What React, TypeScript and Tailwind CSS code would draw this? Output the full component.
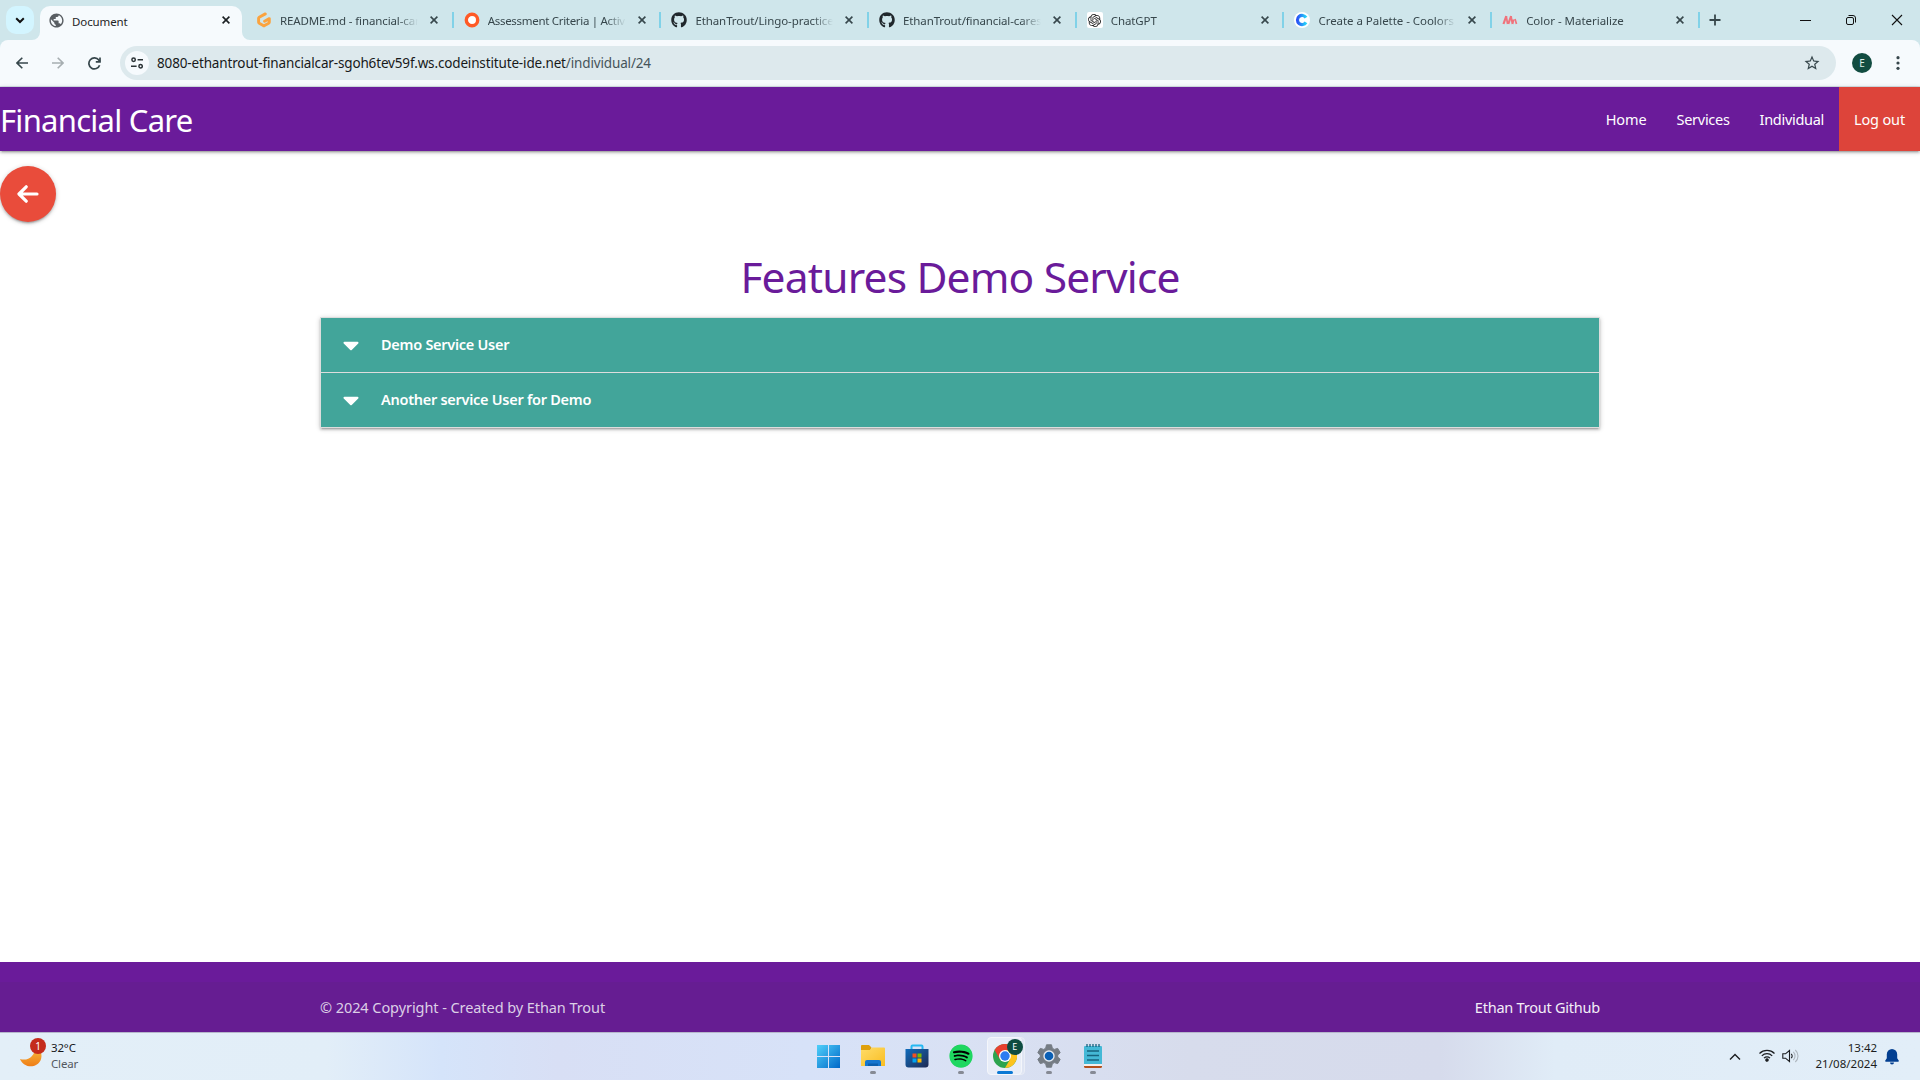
import React from "react";
import { FaGithub, FaSpotify, FaCaretDown } from "react-icons/fa";
import { SiOpenai } from "react-icons/si";
import { MdPublic, MdStarBorder } from "react-icons/md";

function Close({ active }: { active?: boolean }) {
  return (
    <svg width="8" height="8" viewBox="0 0 8 8" className="shrink-0" stroke={active ? "#1b2023" : "#37474c"} strokeWidth="1.6">
      <path d="M.6.6l6.8 6.8M7.4.6L.6 7.4" />
    </svg>
  );
}

function Gitpod() {
  return (
    <svg width="16" height="16" viewBox="0 0 16 16" fill="none" stroke="#fba33e" strokeWidth="2.9" strokeLinecap="round" strokeLinejoin="round">
      <path d="M9.3 1.9L3.2 5.2a1.2 1.2 0 0 0-.6 1v4.1c0 .5.2.8.6 1l4.1 2.3c.4.2.8.2 1.2 0l4.2-2.4c.4-.2.6-.5.6-1V6.600L8.600 9.200" />
    </svg>
  );
}

function Coolors() {
  return (
    <svg width="16" height="16" viewBox="0 0 16 16">
      <defs>
        <linearGradient id="cool" x1="0" x2="1">
          <stop offset="0" stopColor="#2a55f5" />
          <stop offset="1" stopColor="#28d5f8" />
        </linearGradient>
      </defs>
      <circle cx="8" cy="8" r="8" fill="#fff" />
      <path d="M12 5.6A4.6 4.6 0 1 0 12 10.4" fill="none" stroke="url(#cool)" strokeWidth="3.2" />
    </svg>
  );
}

function MaterializeLogo() {
  return (
    <svg width="16" height="16" viewBox="0 0 16 16" fill="none" stroke="#f0737c" strokeWidth="2.2">
      <path d="M1.500 12L4.300 4M6.300 12L9.100 4" />
      <path d="M4.300 4.500L5.600 12M9.100 4.500l1.300 7.500M11.600 7.500l-1 4.500M13 7l1.500 5" strokeWidth="1.700" />
    </svg>
  );
}

const tabs = [
  { title: "README.md - financial-care", icon: <Gitpod />, text: "tracking-[-0.12px]" },
  {
    title: "Assessment Criteria | Activity",
    icon: (
      <svg width="16" height="16" viewBox="0 0 16 16">
        <circle cx="8" cy="8" r="5.7" fill="#fff" stroke="#ff5a26" strokeWidth="3.4" />
      </svg>
    ),
    text: "tracking-[-0.3px]",
  },
  { title: "EthanTrout/Lingo-practice", icon: <FaGithub size={16} color="#20272c" />, text: "tracking-[-0.09px]" },
  { title: "EthanTrout/financial-cares", icon: <FaGithub size={16} color="#20272c" />, text: "tracking-[-0.12px]" },
  {
    title: "ChatGPT",
    icon: (
      <span className="flex size-4 items-center justify-center rounded-[2px] bg-white">
        <SiOpenai size={13} color="#222" />
      </span>
    ),
    text: "tracking-[-0.1px]",
  },
  { title: "Create a Palette - Coolors", icon: <Coolors />, text: "tracking-[-0.04px]" },
  { title: "Color - Materialize", icon: <MaterializeLogo />, text: "tracking-[-0.02px]" },
];

function TabBar() {
  return (
    <div className="flex h-10 bg-[#cfe6eb] text-[11.5px] text-[#37474c]">
      <div className="mt-1.5 ml-1.5 flex size-7 items-center justify-center rounded-[10px] bg-[#d3f5ff]">
        <svg width="10" height="7" viewBox="0 0 10 7" fill="none" stroke="#111" strokeWidth="2">
          <path d="M1.2 1.3L5 5l3.8-3.7" />
        </svg>
      </div>
      <div className="relative mt-1.5 ml-1.5 flex h-[34px] w-[202px] items-center rounded-t-[10px] bg-[#f6fafd] pr-3 pl-2 text-[#1f2426]">
        <svg className="absolute bottom-0 -left-2" width="8" height="8" viewBox="0 0 8 8">
          <path d="M8 0v8H0a8 8 0 0 0 8-8z" fill="#f6fafd" />
        </svg>
        <svg className="absolute -right-2 bottom-0" width="8" height="8" viewBox="0 0 8 8">
          <path d="M0 0v8h8a8 8 0 0 1-8-8z" fill="#f6fafd" />
        </svg>
        <MdPublic size={17} color="#595e63" className="-mt-1.5" />
        <span className="-mt-[3px] ml-[7px] flex-1 tracking-[-0.1px]">Document</span>
        <span className="-mt-1.5"><Close active /></span>
      </div>
      <div className="flex h-10 pl-[3px]">
        {tabs.map((t) => (
          <div key={t.title} className="relative flex w-[207.7px] items-center pl-[11px]">
            <span className="shrink-0">{t.icon}</span>
            <span className="mt-px ml-2 h-5 w-[138px] overflow-hidden leading-5 whitespace-nowrap [mask-image:linear-gradient(to_right,black_118px,transparent_138px)]">
              <span className={t.text}>{t.title}</span>
            </span>
            <span className="ml-3"><Close /></span>
            <span className="absolute top-3 -right-px h-4 w-0.5 bg-[#81d2e8]" />
          </div>
        ))}
      </div>
      <svg className="mt-3.5 ml-[10px]" width="12" height="12" viewBox="0 0 12 12" stroke="#37474c" strokeWidth="1.8">
        <path d="M6 .5v11M.5 6h11" />
      </svg>
      <div className="mt-3.5 mr-[17px] ml-auto flex items-center gap-[34px] self-start">
        <svg width="11" height="12" viewBox="0 0 11 12" stroke="#111"><path d="M0 6.5h11" /></svg>
        <svg width="12" height="12" viewBox="0 0 12 12" fill="none" stroke="#111">
          <rect x="1.500" y="3.500" width="7" height="7" rx="1.500" />
          <path d="M3.500 1.500H8A2.500 2.500 0 0 1 10.500 4v4.500" />
        </svg>
        <svg width="12" height="12" viewBox="0 0 12 12" stroke="#111" strokeWidth="1.1"><path d="M1 1l10 10M11 1L1 11" /></svg>
      </div>
    </div>
  );
}

function Toolbar() {
  return (
    <div className="bg-[#cfe6eb]">
      <div className="flex h-[47px] items-center rounded-t-lg border-b border-[#d5e2e6] bg-[#f6fafd] pl-4">
        <svg width="12" height="12" viewBox="0 0 12 12" fill="none" stroke="#37474c" strokeWidth="1.6">
          <path d="M12 6H1M6.3.7L1 6l5.3 5.3" />
        </svg>
        <svg className="ml-6" width="12" height="12" viewBox="0 0 12 12" fill="none" stroke="#a7aeb1" strokeWidth="1.6">
          <path d="M0 6h11M5.7.7L11 6l-5.3 5.3" />
        </svg>
        <svg className="ml-6" width="13" height="13" viewBox="0 0 13 13" fill="none" stroke="#37474c" strokeWidth="1.7">
          <path d="M11.600 8.200A5.500 5.500 0 1 1 10.800 3.100L12 4.500" />
          <path d="M12 .6v4.200H7.800" />
        </svg>
        <div className="ml-[19px] flex h-[34px] w-[1716px] items-center rounded-full bg-[#dde9ed] pl-[5px]">
          <span className="flex size-6 items-center justify-center rounded-full bg-[#f6fafd]">
            <svg width="12" height="12" viewBox="0 0 12 12" fill="none" stroke="#2a3235" strokeWidth="1.5">
              <circle cx="2.6" cy="2.8" r="1.7" />
              <path d="M6.6 2.8H12M0 9.3h5.6" />
              <circle cx="9.6" cy="9.3" r="1.7" />
            </svg>
          </span>
          <span className="mt-px ml-2 text-[13.5px] tracking-[-0.15px] whitespace-nowrap text-[#17191a]">
            8080-ethantrout-financialcar-sgoh6tev59f.ws.codeinstitute-ide.net<span className="text-[#46545a]">/individual/24</span>
          </span>
          <MdStarBorder size={18} color="#37474c" className="mr-[15px] ml-auto" />
        </div>
        <span className="ml-4 flex size-5 items-center justify-center rounded-full bg-[#124c41] text-[10px] text-[#dceee8]">E</span>
        <svg className="ml-6" width="4" height="14" viewBox="0 0 4 14" fill="#37474c">
          <circle cx="2" cy="1.7" r="1.6" /><circle cx="2" cy="7" r="1.6" /><circle cx="2" cy="12.3" r="1.6" />
        </svg>
      </div>
    </div>
  );
}

function Indicator({ on }: { on?: boolean }) {
  return <span className={on ? "absolute bottom-0.5 h-[3px] w-4 rounded-full bg-[#0a78d4]" : "absolute bottom-0.5 h-[3px] w-1.5 rounded-full bg-[#868a94]"} />;
}

function Slot({ children }: { children: React.ReactNode }) {
  return <div className="relative flex h-10 w-11 items-center justify-center">{children}</div>;
}

function Taskbar() {
  return (
    <div className="grid h-12 grid-cols-[1fr_auto_1fr] border-t border-[#b5b7cb] bg-[linear-gradient(90deg,#e3eff8_0%,#e2eef8_17%,#d5e4fa_23%,#d8dff5_29%,#d7e2f8_42%,#d9e1f4_50%,#d7dcec_62%,#d6dbec_75%,#e0ecf7_81%,#e2eef8_100%)]">
      <div className="flex pl-5">
        <div className="relative mt-[5px] h-8 w-[31px]">
          <svg width="30" height="32" viewBox="0 0 30 32">
            <defs><linearGradient id="moon" x1="0" y1="0" x2="0" y2="1"><stop offset="0" stopColor="#f8bb3c" /><stop offset="1" stopColor="#ef7d17" /></linearGradient></defs>
            <path d="M0 21c8 2.500 15-3 15-11 6 1 8 7 5.500 12.500-4 8-16.500 8-20.500-1.500z" fill="url(#moon)" />
          </svg>
          <span className="absolute top-0 left-[10px] flex size-4 items-center justify-center rounded-full bg-[#c42b1c] text-[10px] text-white">1</span>
        </div>
        <div className="mt-[7px] text-[11.5px] leading-4 tracking-[-0.15px]">
          <div className="text-[#17191c]">32°C</div>
          <div className="text-[#53585f]">Clear</div>
        </div>
      </div>
      <div className="flex items-start pt-[3px] pl-[1.500px]">
        <Slot>
          <svg width="23" height="23" viewBox="0 0 23 23">
            <defs><linearGradient id="win" x1="0" y1="0" x2="1" y2="1"><stop offset="0" stopColor="#4fd0fa" /><stop offset="1" stopColor="#0067c8" /></linearGradient></defs>
            <path d="M0 0h11v11H0zM12 0h11v11H12zM0 12h11v11H0zM12 12h11v11H12z" fill="url(#win)" />
          </svg>
        </Slot>
        <Slot>
          <svg width="24" height="22" viewBox="0 0 24 22">
            <defs><linearGradient id="fold" x1="0" y1="0" x2="1" y2="1"><stop offset="0" stopColor="#ffdc68" /><stop offset="1" stopColor="#f9bd22" /></linearGradient></defs>
            <path d="M0 1.2C0 .5.5 0 1.2 0H8l2.500 2.500L9 6H0z" fill="#dfa00d" />
            <path d="M0 5h9l2-2.500h12a1 1 0 0 1 1 1V21H0z" fill="url(#fold)" />
            <path d="M4 21v-4a2 2 0 0 1 2-2h12a2 2 0 0 1 2 2v4z" fill="#1676cf" />
            <path d="M7 18.500h10V21H7z" fill="#0c5fae" />
          </svg>
          <Indicator />
        </Slot>
        <Slot>
          <svg width="24" height="24" viewBox="0 0 24 24">
            <defs><linearGradient id="store" x1="0" y1="0" x2="1" y2="1"><stop offset="0" stopColor="#0f6cbd" /><stop offset="1" stopColor="#202a52" /></linearGradient></defs>
            <path d="M6.500 6V2.500a1 1 0 0 1 1-1h9a1 1 0 0 1 1 1V6" fill="none" stroke="#25b8f2" strokeWidth="2" />
            <path d="M.5 5h23v15.500a3 3 0 0 1-3 3h-17a3 3 0 0 1-3-3z" fill="url(#store)" />
            <path d="M7.500 9.500h4v4h-4z" fill="#f25022" /><path d="M12.500 9.500h4v4h-4z" fill="#7fba00" />
            <path d="M7.500 14.500h4v4h-4z" fill="#00a4ef" /><path d="M12.500 14.500h4v4h-4z" fill="#ffb900" />
          </svg>
        </Slot>
        <Slot>
          <span className="flex size-[22px] items-center justify-center rounded-full bg-black">
            <FaSpotify size={24} color="#1ed760" className="shrink-0" />
          </span>
          <Indicator />
        </Slot>
        <Slot>
          <span className="absolute top-px right-0.5 h-[38px] w-5 rounded-[4px] border border-[#e9edf6] bg-[#dfe5f3]" />
          <span className="absolute top-px left-1 h-[38px] w-[35px] rounded-[4px] border border-[#f4f6fb] bg-[#e8edf8]" />
          <svg className="relative" width="24" height="24" viewBox="0 0 24 24">
            <circle cx="12" cy="12" r="12" fill="#2da44e" />
            <path d="M1.600 6A12 12 0 0 1 22.400 6H12v6l-5.200 3z" fill="#e8402f" />
            <path d="M22.400 6H12l5.200 9L12 24A12 12 0 0 0 22.400 6z" fill="#fcc31e" />
            <circle cx="12" cy="12" r="6" fill="#fff" /><circle cx="12" cy="12" r="4.700" fill="#2d7cf0" />
          </svg>
          <span className="absolute top-[3px] right-1 flex size-4 items-center justify-center rounded-full bg-[#0e4c41] text-[9px] text-white">E</span>
          <Indicator on />
        </Slot>
        <Slot>
          <svg width="24" height="24" viewBox="0 0 24 24">
            <g fill="#757c84" stroke="#757c84" strokeLinejoin="round">
              <path d="M9.500.8h5l.8 3.400 2 1.200 3.400-1 2.500 4.300-2.500 2.300v2l2.500 2.300-2.500 4.300-3.400-1-2 1.200-.8 3.400h-5l-.8-3.400-2-1.200-3.400 1L.8 15.300 3.300 13v-2L.8 8.700l2.500-4.300 3.400 1 2-1.200z" />
            </g>
            <circle cx="12" cy="12" r="5.700" fill="#e3e9f2" /><circle cx="12" cy="12" r="4.300" fill="#0a5fb4" />
          </svg>
          <Indicator />
        </Slot>
        <Slot>
          <svg width="18" height="24" viewBox="0 0 18 24">
            <path d="M0 21h18v1.500a1.500 1.500 0 0 1-1.500 1.500h-15A1.500 1.500 0 0 1 0 22.500z" fill="#b4501c" />
            <path d="M0 19h18v3H0z" fill="#f3efec" />
            <path d="M0 3a1 1 0 0 1 1-1h16a1 1 0 0 1 1 1v17H0z" fill="#44b8d6" />
            <path d="M3 0v3M6 0v3M9 0v3M12 0v3M15 0v3" stroke="#16607d" strokeWidth="1.300" />
            <path d="M3 7h12M3 11.500h12M3 16h12" stroke="#16637f" strokeWidth="1.600" />
          </svg>
          <Indicator />
        </Slot>
      </div>
      <div className="flex items-start justify-end pr-[21px]">
        <svg className="mt-5" width="12" height="8" viewBox="0 0 12 8" fill="none" stroke="#1b1d20" strokeWidth="1.400"><path d="M1 6.500l5-5 5 5" /></svg>
        <svg className="mt-4 ml-[17px]" width="18" height="13" viewBox="0 0 18 13" fill="none" stroke="#1b1d20" strokeWidth="1.200">
          <path d="M1.500 4.500a10.500 10.500 0 0 1 15 0M3.800 6.900a7.300 7.300 0 0 1 10.400 0M6 9.100a4.200 4.200 0 0 1 6 0" />
          <circle cx="9" cy="11" r="1.200" fill="#1b1d20" />
        </svg>
        <svg className="mt-4 ml-[6px]" width="17" height="14" viewBox="0 0 17 14" fill="none" stroke="#1b1d20" strokeWidth="1.100">
          <path d="M.8 4.800h2.700L7.500 1.500v11L3.500 9.200H.8zM9.200 4.800a3 3 0 0 1 0 4.400" />
          <path d="M11.300 2.800a6 6 0 0 1 0 8.400M13.300 1a8 8 0 0 1 0 12" stroke="#aeb6be" />
        </svg>
        <div className="mt-[7px] ml-[17px] text-right text-[11.5px] leading-4 text-[#1b1d20]">
          <div className="tracking-[-0.05px]">13:42</div>
          <div className="tracking-[0.03px]">21/08/2024</div>
        </div>
        <svg className="mt-4 ml-[8px]" width="14" height="16" viewBox="0 0 14 16" fill="#033f91">
          <path d="M7 0a5.200 5.200 0 0 0-5.200 5.200v4L.3 11.500c-.4.600 0 1.200.6 1.200h12.200c.6 0 1-.6.600-1.200l-1.500-2.300v-4A5.200 5.200 0 0 0 7 0zM5 13.500h4a2 2 0 0 1-4 0z" />
        </svg>
      </div>
    </div>
  );
}

function ServiceUser({ name }: { name: string }) {
  return (
    <li className="flex h-[55px] items-center border-b border-[#ddd] bg-[#42a59a] pl-[17px] text-white">
      <FaCaretDown size={26} className="-mt-px" />
      <span className="-mt-px ml-[17px] text-[14.5px] font-semibold tracking-[-0.27px]">{name}</span>
    </li>
  );
}

export default function App() {
  return (
    <div className="flex h-[1080px] w-[1920px] flex-col overflow-hidden bg-white font-['Noto_Sans','Open_Sans',sans-serif]">
      <TabBar />
      <Toolbar />
      <nav className="flex h-16 shrink-0 items-center bg-[#6a1b9a] text-white shadow-[0_2px_2px_0_rgba(0,0,0,0.14),0_3px_1px_-2px_rgba(0,0,0,0.12),0_1px_5px_0_rgba(0,0,0,0.2)]">
        <span className="pt-[3px] text-[31px] tracking-[-0.73px]">Financial Care</span>
        <div className="ml-auto flex h-16 items-center text-[14.5px]">
          <span className="mt-0.5 px-[15px] tracking-[-0.12px]">Home</span>
          <span className="mt-0.5 px-[15px] tracking-[-0.28px]">Services</span>
          <span className="mt-0.5 px-[15px] tracking-[-0.3px]">Individual</span>
          <span className="flex h-16 w-[81px] items-center justify-center bg-[#dd443a] pt-0.5 tracking-[-0.15px]">Log out</span>
        </div>
      </nav>
      <main className="flex-1">
        <button className="mt-[15px] flex size-14 items-center justify-center rounded-full bg-[#e94c3b] shadow-[0_2px_2px_0_rgba(0,0,0,0.14),0_3px_1px_-2px_rgba(0,0,0,0.12),0_1px_5px_0_rgba(0,0,0,0.2)]">
          <svg width="22" height="18" viewBox="0 0 22 18" fill="none" stroke="#fff" strokeWidth="3.2" strokeLinecap="round" strokeLinejoin="round">
            <path d="M20 9H2.200M9.200 1.800L2 9l7.200 7.200" />
          </svg>
        </button>
        <h1 className="mt-[29px] h-[66px] text-center text-[42.5px] leading-[52px] tracking-[-0.84px] whitespace-nowrap text-[#6a1b9a]">Features Demo Service</h1>
        <ul className="mx-auto w-[1280px] border border-b-0 border-[#ddd] shadow-[0_2px_2px_0_rgba(0,0,0,0.14),0_3px_1px_-2px_rgba(0,0,0,0.12),0_1px_5px_0_rgba(0,0,0,0.2)]">
          <ServiceUser name="Demo Service User" />
          <ServiceUser name="Another service User for Demo" />
        </ul>
      </main>
      <footer className="h-[70px] shrink-0 bg-[#6a1b9a] pt-5">
        <div className="h-[50px] bg-[#661d92]">
          <div className="mx-auto flex h-[50px] w-[1280px] items-center justify-between pt-0.5 text-[14.5px]">
            <span className="tracking-[-0.07px] text-[#dccfe6]">© 2024 Copyright - Created by Ethan Trout</span>
            <span className="tracking-[-0.23px] text-[#f3eef7]">Ethan Trout Github</span>
          </div>
        </div>
      </footer>
      <Taskbar />
    </div>
  );
}
